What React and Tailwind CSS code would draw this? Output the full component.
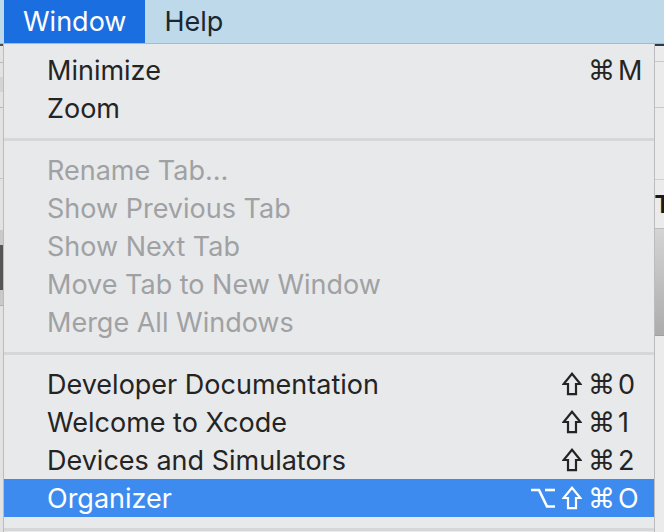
import React from 'react';

const font = { fontFamily: 'Inter, "Noto Sans", "DejaVu Sans", sans-serif' };
const sym = { fontFamily: '"DejaVu Sans", sans-serif' };

const groups = [
  [
    { label: 'Minimize', keys: ['', '', '⌘', 'M'] },
    { label: 'Zoom' },
  ],
  [
    { label: 'Rename Tab…', disabled: true },
    { label: 'Show Previous Tab', disabled: true },
    { label: 'Show Next Tab', disabled: true },
    { label: 'Move Tab to New Window', disabled: true },
    { label: 'Merge All Windows', disabled: true },
  ],
  [
    { label: 'Developer Documentation', keys: ['', '⇧', '⌘', '0'] },
    { label: 'Welcome to Xcode', keys: ['', '⇧', '⌘', '1'] },
    { label: 'Devices and Simulators', keys: ['', '⇧', '⌘', '2'] },
    { label: 'Organizer', keys: ['⌥', '⇧', '⌘', 'O'], active: true },
  ],
];

function ShiftIcon() {
  return (
    <svg width="20" height="24" viewBox="0 0 20 24" fill="none" stroke="currentColor" strokeWidth="2.2" strokeLinejoin="miter">
      <path d="M10 1.8 L18.4 12 H14 V22.2 H6 V12 H1.6 Z" />
    </svg>
  );
}

function OptionIcon() {
  return (
    <svg width="24" height="22" viewBox="0 0 24 22" fill="none" stroke="currentColor" strokeWidth="2.6">
      <path d="M0 3 H8 L16 19.5 H24" />
      <path d="M14 3 H24" />
    </svg>
  );
}

function Shortcut({ keys }) {
  if (!keys) return null;
  const [opt, shift, cmd, key] = keys;
  return (
    <div className="flex shrink-0 items-center">
      <span className="flex w-[30px] justify-center">{opt && <OptionIcon />}</span>
      <span className="flex w-[28px] justify-center">{shift && <ShiftIcon />}</span>
      <span className="w-[31px] text-center text-[27px]" style={sym}>{cmd}</span>
      <span className="w-[37px] pl-[1px] text-left">{key}</span>
    </div>
  );
}

function MenuItem({ item }) {
  const color = item.active
    ? 'bg-[#3e8bef] text-white'
    : item.disabled
    ? 'text-[#a0a1a3]'
    : 'text-[#242424]';
  return (
    <div className={`flex h-[38px] shrink-0 items-center justify-between pl-[43px] text-[27px] leading-none ${color}`}>
      <span>{item.label}</span>
      <Shortcut keys={item.keys} />
    </div>
  );
}

function Separator() {
  return (
    <div className="flex h-[24px] shrink-0 items-center">
      <div className="h-[3px] w-full bg-[#d6d7d9]" />
    </div>
  );
}

export default function App() {
  return (
    <div className="relative h-[532px] w-[664px] overflow-hidden bg-[#e4e4e4]" style={font}>
      {/* menu bar */}
      <div className="flex h-[44px] items-stretch border-b border-[#a9bac6] bg-[#bed9ea] pl-1 text-[27px] leading-none">
        <div className="flex items-center bg-[#1b6ee0] px-[19px] text-white">Window</div>
        <div className="flex items-center px-[19px] text-[#1b2730]">Help</div>
      </div>

      <div className="flex h-[488px]">
        {/* app behind, left */}
        <div className="flex w-[3px] shrink-0 flex-col bg-[#e2e2e2]">
          <div className="h-[2px] shrink-0 bg-[#4a4f55]" />
          <div className="h-[16px] shrink-0" />
          <div className="h-px shrink-0 bg-[#b9b9b9]" />
          <div className="h-[14px] shrink-0" />
          <div className="h-[15px] shrink-0 bg-[#d4d4d4]" />
          <div className="h-[15px] shrink-0" />
          <div className="h-px shrink-0 bg-[#b9b9b9]" />
          <div className="h-[70px] shrink-0" />
          <div className="h-px shrink-0 bg-[#c4c4c4]" />
          <div className="h-[51px] shrink-0" />
          <div className="h-[15px] shrink-0 bg-[#c9c9c9]" />
          <div className="h-[45px] shrink-0 bg-[#555]" />
          <div className="h-[15px] shrink-0 bg-[#c9c9c9]" />
          <div className="h-px shrink-0 bg-[#b0b0b0]" />
        </div>

        {/* the menu */}
        <div className="flex w-[652px] shrink-0 flex-col overflow-hidden border-x border-[#bcbcbe] bg-[#e8e9eb] pt-[7px]">
          {groups.map((g, i) => (
            <React.Fragment key={i}>
              {i > 0 && <Separator />}
              {g.map((item) => (
                <MenuItem key={item.label} item={item} />
              ))}
            </React.Fragment>
          ))}
          <Separator />
        </div>

        {/* app behind, right */}
        <div className="flex min-w-0 flex-1 flex-col overflow-hidden bg-[#ebebeb]">
          <div className="h-[2px] shrink-0 bg-[#2c3a48]" />
          <div className="h-[15px] shrink-0" />
          <div className="h-px shrink-0 bg-[#c9c9c9]" />
          <div className="h-[45px] shrink-0" />
          <div className="h-px shrink-0 bg-[#c9c9c9]" />
          <div className="h-[71px] shrink-0" />
          <div className="h-px shrink-0 bg-[#d0d0d0]" />
          <div className="flex h-[48px] shrink-0 items-center text-[26px] font-bold leading-none text-[#1a1a1a]" style={{ fontFamily: '"Liberation Sans", sans-serif' }}>T</div>
          <div className="h-px shrink-0 bg-[#bdbdbd]" />
          <div className="h-[106px] shrink-0 bg-gradient-to-b from-[#d4d4d4] to-[#acacac]" />
          <div className="h-px shrink-0 bg-[#9e9e9e]" />
        </div>
      </div>
    </div>
  );
}
